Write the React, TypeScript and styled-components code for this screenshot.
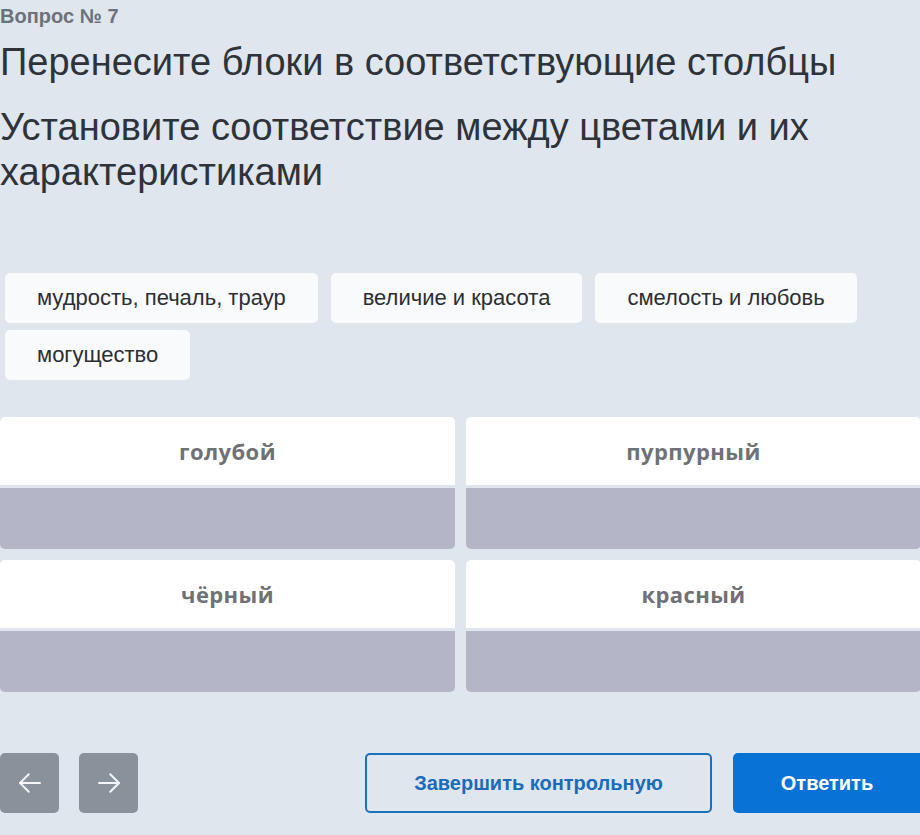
import React from "react"
import styled, { createGlobalStyle } from "styled-components"

const GlobalStyle = createGlobalStyle`
  html, body {
    margin: 0;
    padding: 0;
    background: #dfe6ee;
  }
  body {
    font-family: "Liberation Sans", Arial, sans-serif;
  }
`

const Page = styled.div`
  width: 921px;
  min-height: 835px;
  box-sizing: border-box;
  padding-top: 3px;
  overflow: hidden;
`

const QuestionNumber = styled.div`
  font-size: 20px;
  font-weight: 700;
  color: #6d7178;
  line-height: 26px;
`

const Title = styled.h1`
  margin: 12px 0 0;
  font-size: 38px;
  font-weight: 400;
  line-height: 42px;
  color: #2e333a;
`

const Subtitle = styled.h2`
  margin: 22px 0 0;
  font-size: 38px;
  font-weight: 400;
  line-height: 45px;
  color: #2e333a;
`

const Chips = styled.div`
  display: flex;
  flex-wrap: wrap;
  column-gap: 13px;
  row-gap: 7px;
  margin-top: 78px;
  padding-left: 5px;
  width: 880px;
`

const Chip = styled.div`
  height: 50px;
  box-sizing: border-box;
  padding: 0 32px;
  display: flex;
  align-items: center;
  background: #f9fafb;
  border-radius: 5px;
  font-size: 22px;
  color: #2b2e33;
`

const Grid = styled.div`
  display: grid;
  grid-template-columns: 455px 455px;
  column-gap: 11px;
  row-gap: 11px;
  margin-top: 37px;
`

const Column = styled.div`
  display: flex;
  flex-direction: column;
  gap: 3px;
`

const ColumnHeader = styled.div`
  height: 68px;
  display: flex;
  align-items: center;
  justify-content: center;
  background: #ffffff;
  border-radius: 5px 5px 0 0;
  font-family: "Open Sans", "Liberation Sans", sans-serif;
  font-weight: 700;
  font-size: 22px;
  letter-spacing: 0.4px;
  color: #6f7175;
`

const DropZone = styled.div`
  height: 61px;
  background: #b5b5c8;
  border-radius: 0 0 5px 5px;
`

const Footer = styled.div`
  display: flex;
  align-items: center;
  margin-top: 61px;
  height: 60px;
`

const NavButton = styled.button`
  width: 59px;
  height: 60px;
  margin-right: 20px;
  border: none;
  border-radius: 5px;
  background: #89929b;
  display: flex;
  align-items: center;
  justify-content: center;
  padding: 0;
`

const Spacer = styled.div`
  flex: 1;
`

const FinishButton = styled.button`
  width: 347px;
  height: 60px;
  box-sizing: border-box;
  border: 2px solid #1a70bd;
  border-radius: 5px;
  background: transparent;
  font-family: "Liberation Sans", Arial, sans-serif;
  font-weight: 700;
  font-size: 20px;
  color: #1a6cba;
  margin-right: 21px;
`

const AnswerButton = styled.button`
  width: 188px;
  height: 60px;
  border: none;
  border-radius: 5px 0 0 5px;
  background: #0872d6;
  font-family: "Liberation Sans", Arial, sans-serif;
  font-weight: 700;
  font-size: 20px;
  color: #ffffff;
`

const Arrow = ({ dir }: { dir: "left" | "right" }) => (
  <svg width="30" height="30" viewBox="0 0 24 24" fill="none" stroke="#f4f6f8" strokeWidth="1.6" strokeLinecap="round" strokeLinejoin="round">
    {dir === "left" ? (
      <>
        <path d="M20 12H4" />
        <path d="M11 5l-7 7 7 7" />
      </>
    ) : (
      <>
        <path d="M4 12h16" />
        <path d="M13 5l7 7-7 7" />
      </>
    )}
  </svg>
)

const chips = ["мудрость, печаль, траур", "величие и красота", "смелость и любовь", "могущество"]
const columns = ["голубой", "пурпурный", "чёрный", "красный"]

export default function App() {
  return (
    <Page>
      <GlobalStyle />
      <QuestionNumber>Вопрос № 7</QuestionNumber>
      <Title>Перенесите блоки в соответствующие столбцы</Title>
      <Subtitle>
        Установите соответствие между цветами и их
        <br />
        характеристиками
      </Subtitle>
      <Chips>
        {chips.map((c) => (
          <Chip key={c}>{c}</Chip>
        ))}
      </Chips>
      <Grid>
        {columns.map((c) => (
          <Column key={c}>
            <ColumnHeader>{c}</ColumnHeader>
            <DropZone />
          </Column>
        ))}
      </Grid>
      <Footer>
        <NavButton aria-label="Назад">
          <Arrow dir="left" />
        </NavButton>
        <NavButton aria-label="Вперёд">
          <Arrow dir="right" />
        </NavButton>
        <Spacer />
        <FinishButton>Завершить контрольную</FinishButton>
        <AnswerButton>Ответить</AnswerButton>
      </Footer>
    </Page>
  )
}
